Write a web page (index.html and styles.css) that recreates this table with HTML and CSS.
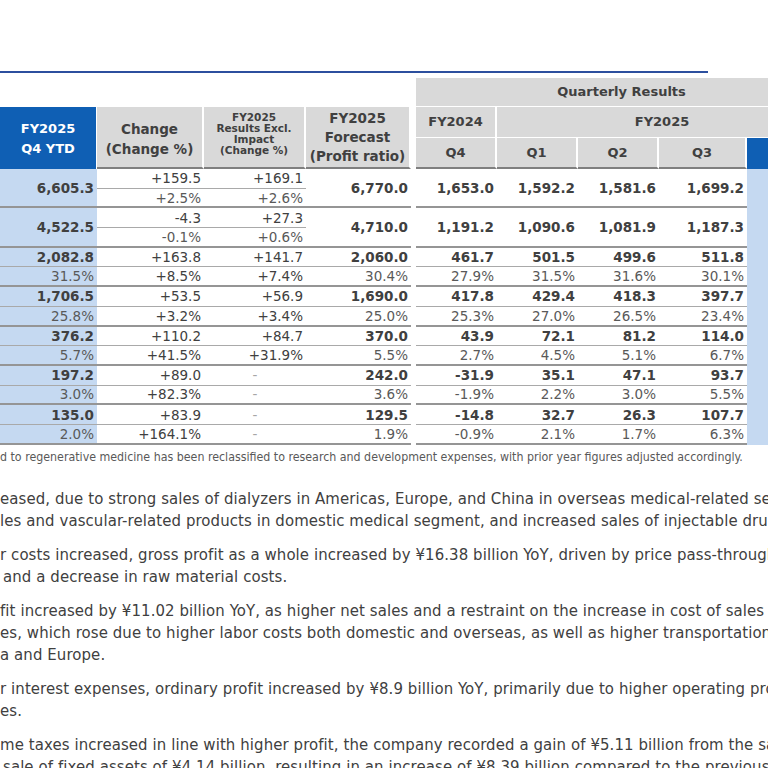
FILE: index.html
```html
<!DOCTYPE html>
<html lang="en">
<head>
    <meta charset="UTF-8">
    <meta name="viewport" content="width=device-width, initial-scale=1.0">
    <title>FY2025 Q4 Results</title>
    <link rel="stylesheet" href="styles.css">
</head>
<body>
    <div class="slide">
        <div class="rule"></div>

        <div class="head">
            <div class="hc ytd">FY2025<br>Q4 YTD</div>
            <div class="hc gray lft c2">Change<br>(Change %)</div>
            <div class="hc gray lft c3 small">FY2025<br>Results Excl.<br>Impact<br>(Change %)</div>
            <div class="hc gray lft c4 tight">FY2025<br>Forecast<br>(Profit ratio)</div>
            <div class="hc gray qr">Quarterly Results</div>
            <div class="hc gray fy24">FY2024</div>
            <div class="hc gray fy25">FY2025</div>
            <div class="hc gray q first">Q4</div>
            <div class="hc gray q">Q1</div>
            <div class="hc gray q">Q2</div>
            <div class="hc gray q">Q3</div>
            <div class="hc cur-head"></div>
        </div>

        <div class="grid">
            <!-- net sales -->
            <div class="c ytd x2 v end">6,605.3</div>
            <div class="c">+159.5</div>
            <div class="c">+169.1</div>
            <div class="c x2 v end">6,770.0</div>
            <div class="c x2 v end first">1,653.0</div>
            <div class="c x2 v end">1,592.2</div>
            <div class="c x2 v end">1,581.6</div>
            <div class="c x2 v end">1,699.2</div>
            <div class="c x2 cur"></div>
            <div class="c p end">+2.5%</div>
            <div class="c p end">+2.6%</div>

            <!-- cost of sales -->
            <div class="c ytd x2 v end">4,522.5</div>
            <div class="c">-4.3</div>
            <div class="c">+27.3</div>
            <div class="c x2 v end">4,710.0</div>
            <div class="c x2 v end first">1,191.2</div>
            <div class="c x2 v end">1,090.6</div>
            <div class="c x2 v end">1,081.9</div>
            <div class="c x2 v end">1,187.3</div>
            <div class="c x2 cur"></div>
            <div class="c p end">-0.1%</div>
            <div class="c p end">+0.6%</div>

            <!-- gross profit -->
            <div class="c ytd v">2,082.8</div>
            <div class="c">+163.8</div>
            <div class="c">+141.7</div>
            <div class="c v">2,060.0</div>
            <div class="c v first">461.7</div>
            <div class="c v">501.5</div>
            <div class="c v">499.6</div>
            <div class="c v">511.8</div>
            <div class="c cur"></div>
            <div class="c ytd p end">31.5%</div>
            <div class="c end">+8.5%</div>
            <div class="c end">+7.4%</div>
            <div class="c p end">30.4%</div>
            <div class="c p end first">27.9%</div>
            <div class="c p end">31.5%</div>
            <div class="c p end">31.6%</div>
            <div class="c p end">30.1%</div>
            <div class="c cur"></div>

            <!-- SG&A -->
            <div class="c ytd v">1,706.5</div>
            <div class="c">+53.5</div>
            <div class="c">+56.9</div>
            <div class="c v">1,690.0</div>
            <div class="c v first">417.8</div>
            <div class="c v">429.4</div>
            <div class="c v">418.3</div>
            <div class="c v">397.7</div>
            <div class="c cur"></div>
            <div class="c ytd p end">25.8%</div>
            <div class="c end">+3.2%</div>
            <div class="c end">+3.4%</div>
            <div class="c p end">25.0%</div>
            <div class="c p end first">25.3%</div>
            <div class="c p end">27.0%</div>
            <div class="c p end">26.5%</div>
            <div class="c p end">23.4%</div>
            <div class="c cur"></div>

            <!-- operating profit -->
            <div class="c ytd v">376.2</div>
            <div class="c">+110.2</div>
            <div class="c">+84.7</div>
            <div class="c v">370.0</div>
            <div class="c v first">43.9</div>
            <div class="c v">72.1</div>
            <div class="c v">81.2</div>
            <div class="c v">114.0</div>
            <div class="c cur"></div>
            <div class="c ytd p end">5.7%</div>
            <div class="c end">+41.5%</div>
            <div class="c end">+31.9%</div>
            <div class="c p end">5.5%</div>
            <div class="c p end first">2.7%</div>
            <div class="c p end">4.5%</div>
            <div class="c p end">5.1%</div>
            <div class="c p end">6.7%</div>
            <div class="c cur"></div>

            <!-- ordinary profit -->
            <div class="c ytd v">197.2</div>
            <div class="c">+89.0</div>
            <div class="c dash">-</div>
            <div class="c v">242.0</div>
            <div class="c v first">-31.9</div>
            <div class="c v">35.1</div>
            <div class="c v">47.1</div>
            <div class="c v">93.7</div>
            <div class="c cur"></div>
            <div class="c ytd p end">3.0%</div>
            <div class="c end">+82.3%</div>
            <div class="c dash end">-</div>
            <div class="c p end">3.6%</div>
            <div class="c p end first">-1.9%</div>
            <div class="c p end">2.2%</div>
            <div class="c p end">3.0%</div>
            <div class="c p end">5.5%</div>
            <div class="c cur"></div>

            <!-- net income -->
            <div class="c ytd v">135.0</div>
            <div class="c">+83.9</div>
            <div class="c dash">-</div>
            <div class="c v">129.5</div>
            <div class="c v first">-14.8</div>
            <div class="c v">32.7</div>
            <div class="c v">26.3</div>
            <div class="c v">107.7</div>
            <div class="c cur"></div>
            <div class="c ytd p end">2.0%</div>
            <div class="c end">+164.1%</div>
            <div class="c dash end">-</div>
            <div class="c p end">1.9%</div>
            <div class="c p end first">-0.9%</div>
            <div class="c p end">2.1%</div>
            <div class="c p end">1.7%</div>
            <div class="c p end">6.3%</div>
            <div class="c cur"></div>
        </div>

        <div class="note">d to regenerative medicine has been reclassified to research and development expenses, with prior year figures adjusted accordingly.</div>

        <div class="text">
            <p><span>eased, due to strong sales of dialyzers in Americas, Europe, and China in overseas medical-related segment</span><span>les and vascular-related products in domestic medical segment, and increased sales of injectable drugs</span></p>
            <p><span>r costs increased, gross profit as a whole increased by ¥16.38 billion YoY, driven by price pass-through</span><span class="in">and a decrease in raw material costs.</span></p>
            <p><span>fit increased by ¥11.02 billion YoY, as higher net sales and a restraint on the increase in cost of sales</span><span>es, which rose due to higher labor costs both domestic and overseas, as well as higher transportation</span><span>a and Europe.</span></p>
            <p><span>r interest expenses, ordinary profit increased by ¥8.9 billion YoY, primarily due to higher operating profit</span><span>es.</span></p>
            <p><span>me taxes increased in line with higher profit, the company recorded a gain of ¥5.11 billion from the sale</span><span class="in">sale of fixed assets of ¥4.14 billion, resulting in an increase of ¥8.39 billion compared to the previous year</span></p>
        </div>
    </div>
</body>
</html>
```

FILE: styles.css
```css
body {
    margin: 0;
    background: #fff;
    font-family: "DejaVu Sans", Verdana, sans-serif;
    color: #404040;
}

.slide {
    width: 768px;
    height: 768px;
    overflow: hidden;
}

.rule {
    width: 708px;
    height: 2px;
    margin-top: 71px;
    background-color: #2c4f9e;
}

/* ---------- header ---------- */

.head,
.grid {
    display: grid;
    grid-template-columns: 97px 107px 102px 105px 86px 81px 81px 88px 80px;
    width: 827px;
}

.head {
    grid-template-rows: 29px 31px 31px;
    margin-top: 5px;
}

.hc {
    display: flex;
    align-items: center;
    justify-content: center;
    text-align: center;
    font-size: 13px;
    font-weight: bold;
    line-height: 20px;
    box-sizing: border-box;
}

.gray {
    background-color: #d9d9d9;
    border-right: 2px solid #fff;
    border-bottom: 1px solid #fff;
}

.ytd.hc {
    grid-column: 1;
    grid-row: 2 / 4;
    background-color: #0f5fb4;
    color: #fff;
    border-right: 1px solid #fff;
    padding-top: 2px;
}

.lft {
    grid-row: 2 / 4;
    border-bottom: 2px solid #7f7f7f;
}

.c2 {
    grid-column: 2;
    font-size: 13.5px;
    padding-top: 3px;
}

.c3 { grid-column: 3; }
.c4 { grid-column: 4; }

.small {
    font-size: 10.5px;
    line-height: 11px;
    padding-bottom: 6px;
}

.tight {
    line-height: 19px;
    font-size: 13.5px;
    padding-top: 1px;
}

.qr {
    grid-column: 5 / 10;
    grid-row: 1;
    border-right: none;
    margin-left: 5px;
}

.fy24 {
    grid-column: 5;
    grid-row: 2;
    margin-left: 5px;
}

.fy25 {
    grid-column: 6 / 10;
    grid-row: 2;
    border-right: none;
}

.q {
    grid-row: 3;
    border-bottom: 2px solid #7f7f7f;
}

.cur-head {
    grid-column: 9;
    grid-row: 3;
    background-color: #0f5fb4;
}

/* ---------- body ---------- */

.grid {
    grid-auto-rows: 19.7px;
}

.c {
    box-sizing: border-box;
    display: flex;
    align-items: center;
    justify-content: flex-end;
    padding-right: 3px;
    font-size: 13.5px;
    white-space: nowrap;
    border-bottom: 1px solid #a9a9a9;
}

.first {
    margin-left: 5px;
}

.x2 {
    grid-row: span 2;
}

.v {
    font-weight: bold;
}

.p {
    color: #595959;
}

.end {
    border-bottom: 2px solid #959595;
}

.dash {
    justify-content: center;
    color: #a6a6a6;
    padding-right: 0;
}

.ytd {
    background-color: #c5d9f1;
}

.cur {
    background-color: #c5d9f1;
    border-bottom: none;
}

/* ---------- notes ---------- */

.note {
    margin-top: 5px;
    font-family: "DejaVu Sans Condensed", "Liberation Sans Narrow", sans-serif;
    font-stretch: condensed;
    font-size: 12.3px;
    line-height: 15px;
    color: #595959;
    white-space: nowrap;
}

.text {
    margin-top: 23px;
    font-family: "DejaVu Sans Condensed", "Liberation Sans Narrow", sans-serif;
    font-stretch: condensed;
    font-size: 16.6px;
    letter-spacing: 0.1px;
    line-height: 22px;
    color: #404040;
}

.text p {
    margin: 0 0 12px;
}

.text span {
    display: block;
    white-space: nowrap;
}

.text .in {
    padding-left: 3px;
}
```
